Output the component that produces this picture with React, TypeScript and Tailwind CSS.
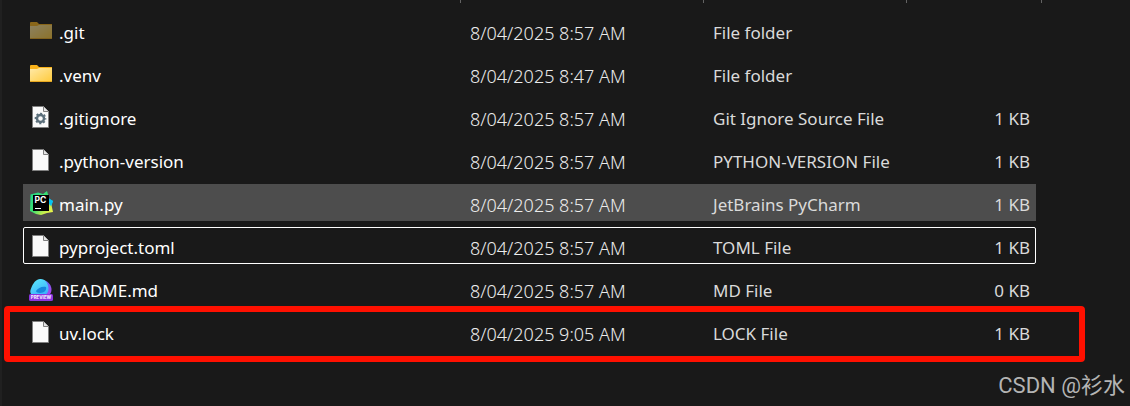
import type { ReactNode } from "react";
import clsx from "clsx";

type IconKind = "folder" | "folder-hidden" | "settings" | "blank" | "pycharm" | "preview";

interface FileItem {
  name: string;
  modified: string;
  type: string;
  size?: string;
  icon: IconKind;
  state?: "hovered" | "focused" | "marked";
}

const files: FileItem[] = [
  { name: ".git", modified: "8/04/2025 8:57 AM", type: "File folder", icon: "folder-hidden" },
  { name: ".venv", modified: "8/04/2025 8:47 AM", type: "File folder", icon: "folder" },
  { name: ".gitignore", modified: "8/04/2025 8:57 AM", type: "Git Ignore Source File", size: "1 KB", icon: "settings" },
  { name: ".python-version", modified: "8/04/2025 8:57 AM", type: "PYTHON-VERSION File", size: "1 KB", icon: "blank" },
  { name: "main.py", modified: "8/04/2025 8:57 AM", type: "JetBrains PyCharm", size: "1 KB", icon: "pycharm", state: "hovered" },
  { name: "pyproject.toml", modified: "8/04/2025 8:57 AM", type: "TOML File", size: "1 KB", icon: "blank", state: "focused" },
  { name: "README.md", modified: "8/04/2025 8:57 AM", type: "MD File", size: "0 KB", icon: "preview" },
  { name: "uv.lock", modified: "8/04/2025 9:05 AM", type: "LOCK File", size: "1 KB", icon: "blank", state: "marked" },
];

function Svg({ children, className }: { children: ReactNode; className?: string }) {
  return (
    <svg viewBox="0 0 24 24" aria-hidden="true" className={clsx("size-6 shrink-0", className)}>
      {children}
    </svg>
  );
}

function FolderIcon({ hidden }: { hidden?: boolean }) {
  return (
    <Svg className={hidden ? "opacity-50" : undefined}>
      <defs>
        <linearGradient id="folder" x1="0" y1="0" x2="1" y2="1">
          <stop offset="0" stopColor="#ffe9a8" />
          <stop offset="1" stopColor="#ffca3a" />
        </linearGradient>
      </defs>
      <path d="M1 4a1 1 0 0 1 1-1h6l2 2h13v3H1z" fill="#f9b21a" />
      <path d="M1 7h7l2-1h13v13a1 1 0 0 1-1 1H2a1 1 0 0 1-1-1z" fill="url(#folder)" />
      <path d="M1 19h22a1 1 0 0 1-1 1H2a1 1 0 0 1-1-1z" fill="#e8a820" />
    </Svg>
  );
}

function PageIcon({ gear }: { gear?: boolean }) {
  return (
    <Svg>
      <path d="M3.5 1.5h11l5 5v16h-16z" fill="#fafafa" stroke="#808080" />
      <path d="M14.5 1.5v5h5" fill="#e4e4e4" stroke="#808080" />
      {gear && (
        <>
          <circle cx="11.5" cy="13.5" r="3.5" fill="none" stroke="#5a6e7a" strokeWidth="2.4" />
          <circle cx="11.5" cy="13.5" r="5" fill="none" stroke="#5a6e7a" strokeWidth="1.7" strokeDasharray="2.1 1.827" strokeDashoffset="1.05" />
        </>
      )}
    </Svg>
  );
}

function PyCharmIcon() {
  return (
    <Svg>
      <defs>
        <linearGradient id="pycharm" x1="0" y1="0" x2="1" y2="1">
          <stop offset="0" stopColor="#21d789" />
          <stop offset="0.5" stopColor="#3ee070" />
          <stop offset="0.75" stopColor="#c9ee4c" />
          <stop offset="1" stopColor="#fcf84a" />
        </linearGradient>
      </defs>
      <path d="M15 3l6 5 3 2-2 6-8-5z" fill="#07c3f2" />
      <path d="M1.5 3.5L9 1.5l5 1.5 4-3 1.5 5 .5 5 2 2 2 9-6 1-6 2-5-1-4-2-2-1z" fill="url(#pycharm)" />
      <path d="M20 8l4 2-2 5-2-2z" fill="#07c3f2" />
      <path d="M4 4h16v16H4z" fill="#000" />
      <text x="5.5" y="12" fontSize="8.5" fontWeight="700" fill="#fff" fontFamily="Inter, sans-serif">
        PC
      </text>
      <path d="M6 17h6v1H6z" fill="#fff" />
    </Svg>
  );
}

function PreviewIcon() {
  return (
    <Svg>
      <defs>
        <linearGradient id="orb" x1="0" y1="0" x2="0.6" y2="1">
          <stop offset="0" stopColor="#5cecff" />
          <stop offset="1" stopColor="#3db4fa" />
        </linearGradient>
        <linearGradient id="orbEdge" x1="0" y1="0" x2="1" y2="1">
          <stop offset="0" stopColor="#2788e8" />
          <stop offset="1" stopColor="#b83cf0" />
        </linearGradient>
      </defs>
      <path d="M13 3c5 0 9 4 9.5 9 .2 3-1 5-2.500 6H6z" fill="url(#orbEdge)" />
      <path d="M1.5 13C3 9 5 3 11 2c5-.5 8 4 8.500 9 .2 3-1 5-3 7H3c-1.500-1-2-3-1.500-5z" fill="url(#orb)" />
      <path d="M7 14c2-3 6-5 10-4 1 3-2 6-6 6-2 0-4-1-4-2z" fill="#1687de" />
      <rect x="0" y="17" width="24" height="7" rx="1.6" fill="#8a35df" />
      <text x="12" y="22" textAnchor="middle" fontSize="4.4" fontWeight="800" fill="#f3e6ff" fontFamily="Inter, sans-serif">
        PREVIEW
      </text>
    </Svg>
  );
}

function FileIcon({ kind }: { kind: IconKind }) {
  switch (kind) {
    case "folder":
      return <FolderIcon />;
    case "folder-hidden":
      return <FolderIcon hidden />;
    case "settings":
      return <PageIcon gear />;
    case "pycharm":
      return <PyCharmIcon />;
    case "preview":
      return <PreviewIcon />;
    default:
      return <PageIcon />;
  }
}

function FileRow({ file }: { file: FileItem }) {
  const { state } = file;

  return (
    <tr
      className={clsx(
        "relative h-[37px] rounded-[2px]",
        state === "hovered" && "bg-[#4d4d4d]",
        state === "focused" && "outline-1 -outline-offset-1 outline-white",
      )}
    >
      <td className="p-0 pl-[6px] text-white">
        <div className="flex items-center gap-[6px]">
          <FileIcon kind={file.icon} />
          <span className="pt-1">{file.name}</span>
        </div>
      </td>
      <td className="p-0 pt-1 pl-[10px] text-lg leading-6 font-light text-[#ececec]">{file.modified}</td>
      <td className="p-0 pt-1 pl-[10px]">{file.type}</td>
      <td className="p-0 pt-1 pr-[6px] text-right">
        {file.size}
        {/* Red highlight frame */}
        {state === "marked" && (
          <span className="pointer-events-none absolute -top-[7px] -right-[49px] -bottom-[12px] -left-[19px] rounded-[4px] border-6 border-[#ff1000]" />
        )}
      </td>
    </tr>
  );
}

export default function App() {
  return (
    <main className="min-h-screen overflow-hidden border-l-2 border-[#202020] bg-[#191919] font-['Noto_Sans','Noto_Sans_CJK_SC',sans-serif] text-[17px] leading-6 text-[#dadada]">
      <div className="pr-[94px] pl-[21px]">
        {/* Column separators */}
        <div className="-mr-[6px] flex h-[3px] justify-end">
          <div className="w-[243px] border-l border-[#636363]" />
          <div className="w-[203px] border-l border-[#636363]" />
          <div className="w-[136px] border-x border-[#636363]" />
        </div>

        <table className="mt-[3px] w-full table-fixed border-separate border-spacing-x-0 border-spacing-y-[6px]">
          <colgroup>
            <col />
            <col className="w-[243px]" />
            <col className="w-[203px]" />
            <col className="w-[130px]" />
          </colgroup>
          <tbody>
            {files.map((file) => (
              <FileRow key={file.name} file={file} />
            ))}
          </tbody>
        </table>
      </div>

      <footer className="flex justify-end pt-4 pr-[5px]">
        <span className="font-['Roboto','Noto_Sans_CJK_SC',sans-serif] text-[22px] leading-7 text-[#b4b4b4]">
          CSDN @衫水
        </span>
      </footer>
    </main>
  );
}
